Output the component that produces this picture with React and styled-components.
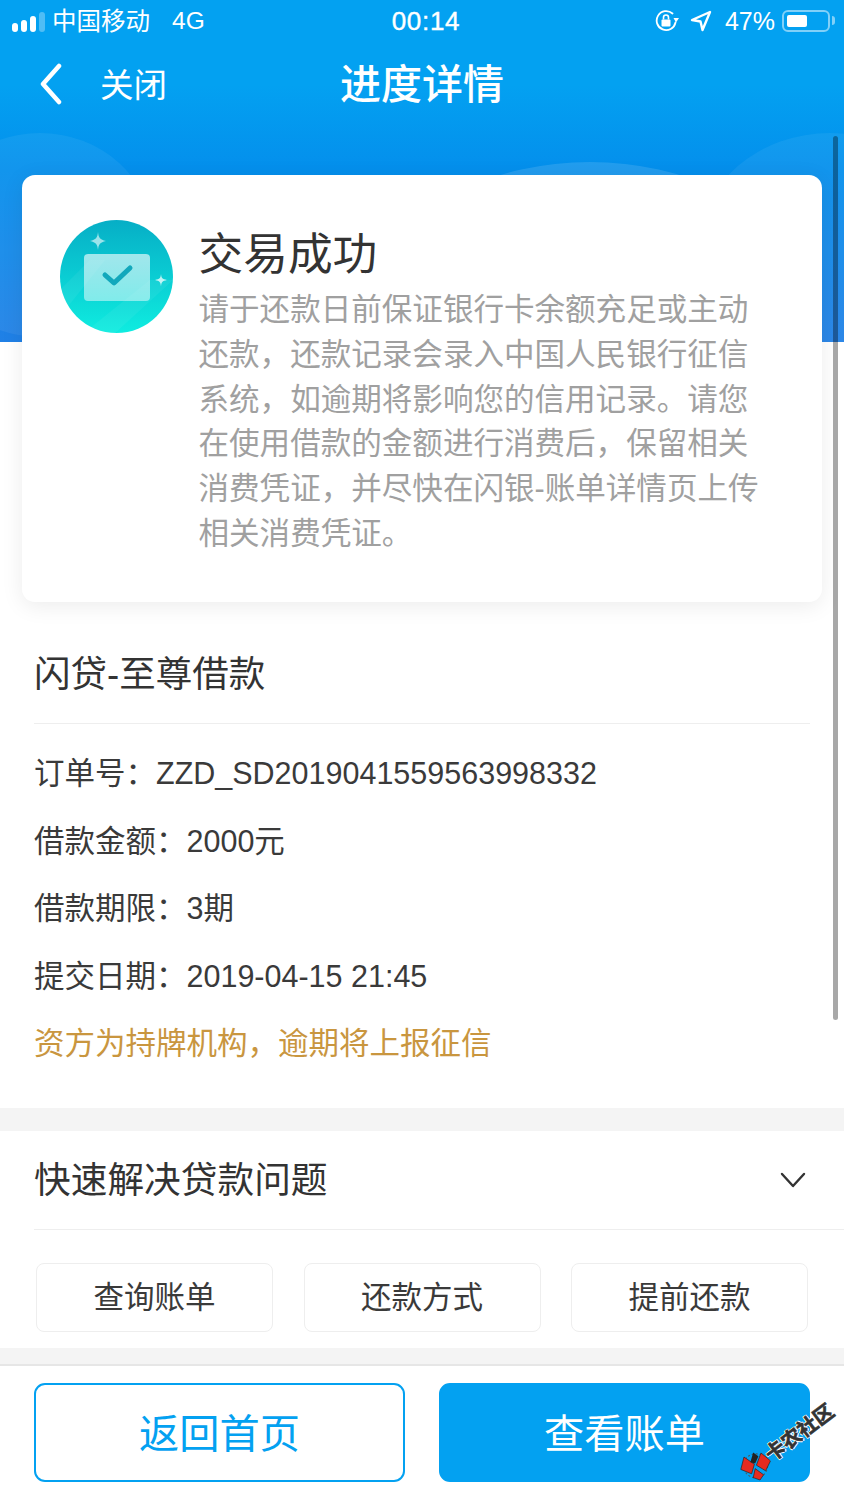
import React from "react";
import styled, { createGlobalStyle } from "styled-components";

const GlobalStyle = createGlobalStyle`
  html, body {
    margin: 0;
    padding: 0;
    background: #fff;
  }
  * {
    box-sizing: border-box;
  }
`;

const FONT = `"Liberation Sans", "Noto Sans CJK SC", sans-serif`;

const Page = styled.div`
  position: relative;
  width: 844px;
  height: 1500px;
  overflow: hidden;
  background: #fff;
  font-family: ${FONT};
  color: #333;
`;

const HeroBackdrop = styled.div`
  position: absolute;
  top: 0;
  left: 0;
  width: 100%;
  height: 342px;
  background: linear-gradient(180deg, #03a1f1 0, #03a1f1 85px, #048fec 170px, #2080e6 342px);
`;

const Hills = styled.svg`
  position: absolute;
  top: 0;
  left: 0;
`;

const Content = styled.div`
  position: relative;
  display: flex;
  flex-direction: column;
  height: 100%;
`;

const StatusBar = styled.div`
  display: grid;
  grid-template-columns: 1fr auto 1fr;
  align-items: center;
  height: 42px;
  padding: 0 9px 0 12px;
  color: #fff;
  font-size: 24.5px;
`;

const StatusLeft = styled.div`
  display: flex;
  align-items: center;
`;

const SignalBars = styled.div`
  display: flex;
  align-items: flex-end;
  gap: 3px;
  margin-right: 7px;
  height: 22px;
`;

const SignalBar = styled.span`
  display: block;
  width: 6px;
  height: ${({ $h }) => $h}px;
  border-radius: 3px;
  background: ${({ $dim }) => ($dim ? "rgba(255,255,255,.3)" : "#fff")};
`;

const Carrier = styled.span`
  margin-right: 22px;
  padding-bottom: 3px;
`;

const Clock = styled.div`
  margin-left: 5px;
  font-size: 26px;
  letter-spacing: 0.7px;
  -webkit-text-stroke: 0.4px #fff;
`;

const StatusRight = styled.div`
  display: flex;
  align-items: center;
  justify-content: flex-end;
`;

const Percent = styled.span`
  margin: 0 7px 0 13px;
  font-size: 25px;
`;

const Battery = styled.div`
  position: relative;
  width: 48px;
  height: 22px;
  padding: 3px;
  border: 2px solid rgba(255, 255, 255, 0.5);
  border-radius: 6px;
  margin-right: 5px;

  &::before {
    content: "";
    display: block;
    width: 20px;
    height: 100%;
    border-radius: 2px;
    background: #fff;
  }

  &::after {
    content: "";
    position: absolute;
    right: -7px;
    top: 4px;
    width: 3px;
    height: 9px;
    border-radius: 0 3px 3px 0;
    background: rgba(255, 255, 255, 0.5);
  }
`;

const NavBar = styled.div`
  display: grid;
  grid-template-columns: 1fr auto 1fr;
  align-items: center;
  height: 83px;
  color: #fff;
`;

const BackButton = styled.div`
  display: flex;
  align-items: center;
  padding-left: 40px;
  font-size: 33.5px;
`;

const BackLabel = styled.span`
  margin-left: 38px;
  padding-bottom: 2px;
`;

const NavTitle = styled.div`
  padding-bottom: 6px;
  font-size: 41px;
  font-weight: 500;
`;

const SummaryCard = styled.section`
  display: flex;
  gap: 25.5px;
  height: 427px;
  margin: 50px 22px 0;
  padding: 45px 38px 0;
  background: #fff;
  border-radius: 13px;
  box-shadow: 0 4px 22px rgba(0, 0, 0, 0.08);
`;

const SummaryBody = styled.div`
  flex: 1;
  min-width: 0;
`;

const SummaryTitle = styled.h2`
  margin: 3px 0 0;
  font-size: 44.7px;
  line-height: 64px;
  font-weight: 400;
  color: #333;
`;

const SummaryText = styled.p`
  margin: 0;
  font-size: 30.55px;
  line-height: 44.8px;
  color: #a0a0a0;
`;

const LoanSection = styled.section`
  padding: 0 34px;
  height: 506px;
`;

const LoanTitle = styled.div`
  display: flex;
  align-items: center;
  height: 122px;
  padding-top: 17px;
  border-bottom: 1px solid #eee;
  font-size: 36.5px;
  color: #333;
`;

const DetailList = styled.div`
  display: flex;
  flex-direction: column;
  padding-top: 16px;
`;

const DetailRow = styled.div`
  height: 67.5px;
  line-height: 67.5px;
  font-size: 30.5px;
  color: ${({ $notice }) => ($notice ? "#c9963f" : "#3a3a3a")};
  white-space: nowrap;
`;

const Gap = styled.div`
  height: ${({ $h }) => $h}px;
  background: #f4f4f4;
  flex: none;
`;

const QuickSection = styled.section`
  padding-left: 34px;
  flex: none;
`;

const QuickHeader = styled.div`
  display: flex;
  align-items: center;
  justify-content: space-between;
  height: 99px;
  padding-right: 38px;
  border-bottom: 1px solid #eee;
  font-size: 36.7px;
`;

const QuickHeaderLabel = styled.span`
  padding-bottom: 6px;
`;

const QuickActions = styled.div`
  display: grid;
  grid-template-columns: repeat(3, 237px);
  gap: 30.5px;
  padding: 33px 0 16px 2px;
`;

const QuickButton = styled.div`
  display: flex;
  align-items: center;
  justify-content: center;
  height: 69px;
  padding-bottom: 6px;
  border: 1px solid #eee;
  border-radius: 8px;
  font-size: 30.5px;
  color: #3a3a3a;
`;

const Footer = styled.footer`
  display: grid;
  grid-template-columns: 371px 371px;
  gap: 34px;
  padding: 17px 34px 0;
  border-top: 2px solid #e6e6e6;
  flex: none;
`;

const FooterButton = styled.div`
  display: flex;
  align-items: center;
  justify-content: center;
  height: 99px;
  padding-bottom: 4px;
  border-radius: 11px;
  border: 2px solid #03a1f1;
  font-size: 40.2px;
  color: ${({ $primary }) => ($primary ? "#fff" : "#03a1f1")};
  background: ${({ $primary }) => ($primary ? "#03a1f1" : "#fff")};
`;

const ScrollThumb = styled.div`
  position: absolute;
  top: 136px;
  left: 833px;
  width: 5px;
  height: 884px;
  border-radius: 3px;
  background: rgba(0, 0, 0, 0.34);
`;

const Watermark = styled.div`
  position: absolute;
  left: 743px;
  top: 1448px;
  display: flex;
  align-items: center;
  transform: rotate(-37deg);
  transform-origin: 18px 20px;
`;

const WatermarkText = styled.span`
  font-size: 20px;
  font-weight: 700;
  line-height: 24px;
  color: #333;
  white-space: nowrap;
  -webkit-text-stroke: 0.6px #333;
  text-shadow: 1px 1px 0 #fff, -1px -1px 0 #fff, 1px -1px 0 #fff, -1px 1px 0 #fff;
`;

function SuccessIcon() {
  return (
    <svg width="113" height="113" viewBox="0 0 113 113" style={{ flex: "none" }}>
      <defs>
        <linearGradient id="disc" x1="0" y1="0" x2="0" y2="1">
          <stop offset="0" stopColor="#06aec6" />
          <stop offset="1" stopColor="#10ece0" />
        </linearGradient>
        <linearGradient id="note" x1="0" y1="0" x2="0" y2="1">
          <stop offset="0" stopColor="#fff" stopOpacity=".62" />
          <stop offset="1" stopColor="#fff" stopOpacity=".48" />
        </linearGradient>
        <clipPath id="discClip">
          <circle cx="56.5" cy="56.5" r="56.5" />
        </clipPath>
      </defs>
      <circle cx="56.5" cy="56.5" r="56.5" fill="url(#disc)" />
      <g clipPath="url(#discClip)" fill="#fff" opacity=".05">
        <path d="M0 70 L30 40 L45 40 L5 90 Z" />
        <path d="M24 113 L90 60 L113 60 L55 113 Z" />
      </g>
      <rect x="24" y="34" width="66" height="47" rx="4" fill="url(#note)" />
      <path d="M45 55 L54 63 L70 48" fill="none" stroke="#12a8bc" strokeWidth="5" strokeLinecap="round" strokeLinejoin="round" />
      <path d="M38 12 C38.6 18 40 19.5 46 21 C40 22.5 38.6 24 38 30 C37.4 24 36 22.5 30 21 C36 19.5 37.4 18 38 12 Z" fill="#fff" opacity=".6" />
      <path d="M101 54 C101.4 58 102.2 59 107 60 C102.2 61 101.4 62 101 66.5 C100.6 62 99.8 61 95 60 C99.8 59 100.6 58 101 54 Z" fill="#fff" opacity=".75" />
    </svg>
  );
}

function LockRotation() {
  return (
    <svg width="24" height="24" viewBox="0 0 24 24" fill="none">
      <path d="M20.5 13.5 A9.5 9.5 0 1 1 17.5 4.5" stroke="#fff" strokeWidth="1.8" strokeLinecap="round" />
      <path d="M18.5 9 L24 9 L21 13.5 Z" fill="#fff" />
      <rect x="6.5" y="10.5" width="9" height="7" rx="1" fill="#fff" />
      <path d="M8.5 10.5 V8.5 A2.5 2.5 0 0 1 13.5 8.5 V10.5" stroke="#fff" strokeWidth="1.6" />
    </svg>
  );
}

function LocationArrow() {
  return (
    <svg width="22" height="22" viewBox="0 0 22 22" fill="none" style={{ marginLeft: 11 }}>
      <path d="M20 2 L2 10 L10.5 11.5 L12.5 20 Z" stroke="#fff" strokeWidth="2.4" strokeLinejoin="round" />
    </svg>
  );
}

function BackChevron() {
  return (
    <svg width="22" height="42" viewBox="0 0 22 42" fill="none">
      <path d="M19 3 L3 21 L19 39" stroke="#fff" strokeWidth="4.5" strokeLinecap="round" strokeLinejoin="round" />
    </svg>
  );
}

function ChevronDown() {
  return (
    <svg width="26" height="16" viewBox="0 0 26 16" fill="none">
      <path d="M2 2 L13 14 L24 2" stroke="#333" strokeWidth="2.4" strokeLinecap="round" strokeLinejoin="round" />
    </svg>
  );
}

function WatermarkLogo() {
  return (
    <svg width="30" height="30" viewBox="0 0 30 30" style={{ flex: "none" }}>
      <circle cx="15" cy="15" r="12" fill="none" stroke="#555" strokeWidth="1" strokeDasharray="2 2" />
      <path d="M1 9 L11 1 L15 13 L7 19 Z" fill="#e52b20" stroke="#222" strokeWidth=".6" />
      <path d="M16 15 L27 8 L30 20 L20 25 Z" fill="#e52b20" stroke="#222" strokeWidth=".6" />
      <path d="M6 23 L13 17 L16 27 L10 29 Z" fill="#e52b20" stroke="#222" strokeWidth=".6" />
      <path d="M13 9 L21 3 L23 9 L16 13 Z" fill="#222" />
    </svg>
  );
}

const details = [
  "订单号：ZZD_SD2019041559563998332",
  "借款金额：2000元",
  "借款期限：3期",
  "提交日期：2019-04-15 21:45",
];

const quickActions = ["查询账单", "还款方式", "提前还款"];

export default function App() {
  return (
    <>
      <GlobalStyle />
      <Page>
        <HeroBackdrop>
          <Hills width="844" height="342" viewBox="0 0 844 342">
            <ellipse cx="40" cy="235" rx="112" ry="102" fill="#fff" opacity=".06" />
            <ellipse cx="590" cy="260" rx="180" ry="98" fill="#fff" opacity=".12" />
            <ellipse cx="830" cy="245" rx="130" ry="112" fill="#fff" opacity=".06" />
          </Hills>
        </HeroBackdrop>
        <Content>
          <StatusBar>
            <StatusLeft>
              <SignalBars>
                <SignalBar $h={9} />
                <SignalBar $h={12} />
                <SignalBar $h={16} />
                <SignalBar $h={20} $dim />
              </SignalBars>
              <Carrier>中国移动</Carrier>
              4G
            </StatusLeft>
            <Clock>00:14</Clock>
            <StatusRight>
              <LockRotation />
              <LocationArrow />
              <Percent>47%</Percent>
              <Battery />
            </StatusRight>
          </StatusBar>
          <NavBar>
            <BackButton>
              <BackChevron />
              <BackLabel>关闭</BackLabel>
            </BackButton>
            <NavTitle>进度详情</NavTitle>
            <span />
          </NavBar>
          <SummaryCard>
            <SuccessIcon />
            <SummaryBody>
              <SummaryTitle>交易成功</SummaryTitle>
              <SummaryText>
                请于还款日前保证银行卡余额充足或主动
                <br />
                还款，还款记录会录入中国人民银行征信
                <br />
                系统，如逾期将影响您的信用记录。请您
                <br />
                在使用借款的金额进行消费后，保留相关
                <br />
                消费凭证，并尽快在闪银-账单详情页上传
                <br />
                相关消费凭证。
              </SummaryText>
            </SummaryBody>
          </SummaryCard>
          <LoanSection>
            <LoanTitle>闪贷-至尊借款</LoanTitle>
            <DetailList>
              {details.map((row) => (
                <DetailRow key={row}>{row}</DetailRow>
              ))}
              <DetailRow $notice>资方为持牌机构，逾期将上报征信</DetailRow>
            </DetailList>
          </LoanSection>
          <Gap $h={23} />
          <QuickSection>
            <QuickHeader>
              <QuickHeaderLabel>快速解决贷款问题</QuickHeaderLabel>
              <ChevronDown />
            </QuickHeader>
            <QuickActions>
              {quickActions.map((label) => (
                <QuickButton key={label}>{label}</QuickButton>
              ))}
            </QuickActions>
          </QuickSection>
          <Gap $h={16} />
          <Footer>
            <FooterButton>返回首页</FooterButton>
            <FooterButton $primary>查看账单</FooterButton>
          </Footer>
        </Content>
        <ScrollThumb />
        <Watermark>
          <WatermarkLogo />
          <WatermarkText>卡农社区</WatermarkText>
        </Watermark>
      </Page>
    </>
  );
}
